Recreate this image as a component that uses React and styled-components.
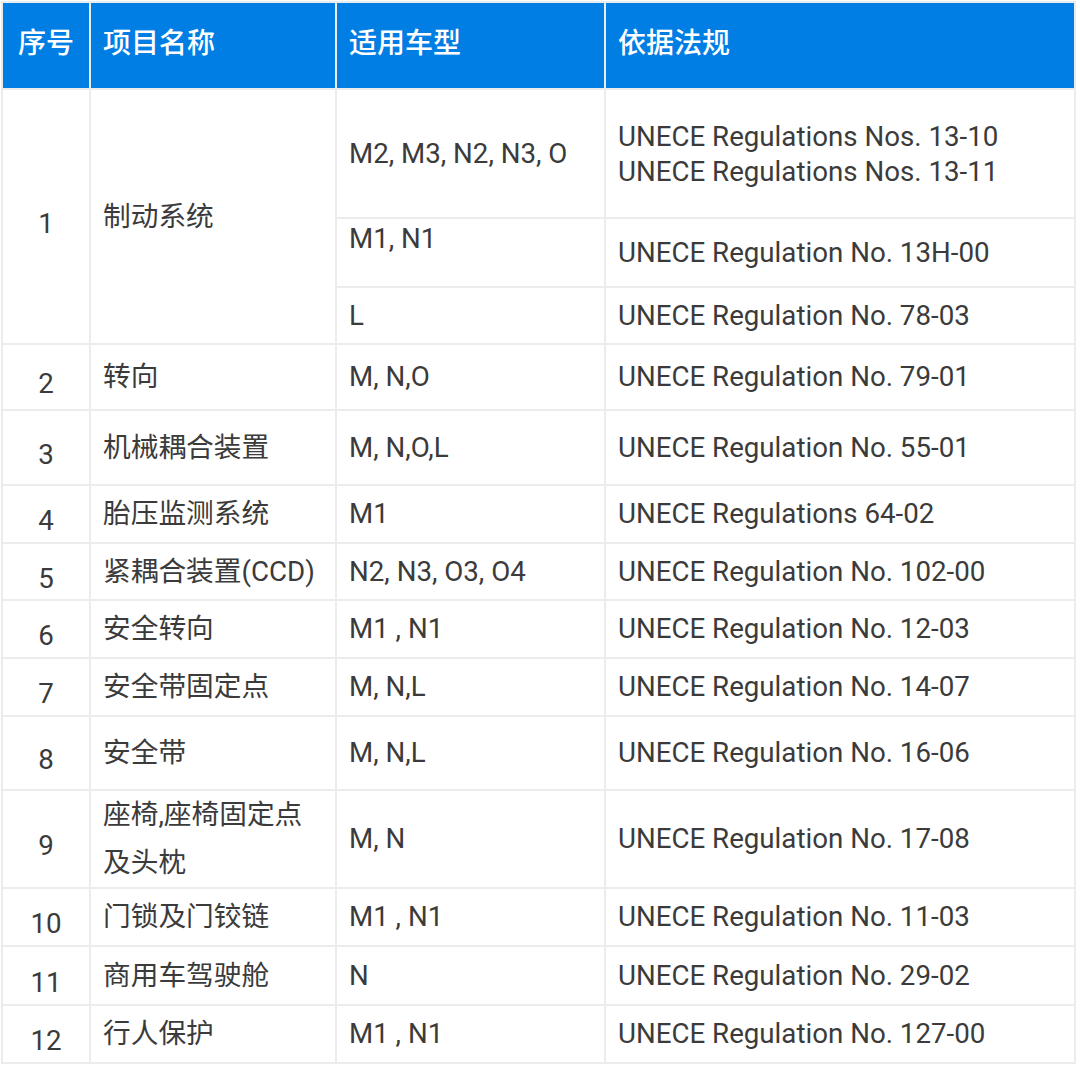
import React from "react";
import styled, { createGlobalStyle } from "styled-components";

const GlobalStyle = createGlobalStyle`
    html, body {
        margin: 0;
        padding: 0;
        background: #ffffff;
    }
    body {
        font-family: Roboto, "Noto Sans CJK SC", "Noto Sans", sans-serif;
    }
`;

const rows = [
    { no: 10, name: "门锁及门铰链", models: "M1 , N1", rule: "UNECE Regulation No. 11-03", h: 58 },
    { no: 11, name: "商用车驾驶舱", models: "N", rule: "UNECE Regulation No. 29-02", h: 59 },
    { no: 12, name: "行人保护", models: "M1 , N1", rule: "UNECE Regulation No. 127-00", h: 58 }
];

const middleRows = [
    { no: 2, name: "转向", models: "M, N,O", rule: "UNECE Regulation No. 79-01", h: 66 },
    { no: 3, name: "机械耦合装置", models: "M, N,O,L", rule: "UNECE Regulation No. 55-01", h: 75 },
    { no: 4, name: "胎压监测系统", models: "M1", rule: "UNECE Regulations 64-02", h: 58 },
    { no: 5, name: "紧耦合装置(CCD)", models: "N2, N3, O3, O4", rule: "UNECE Regulation No. 102-00", h: 57 },
    { no: 6, name: "安全转向", models: "M1 , N1", rule: "UNECE Regulation No. 12-03", h: 58 },
    { no: 7, name: "安全带固定点", models: "M, N,L", rule: "UNECE Regulation No. 14-07", h: 58 },
    { no: 8, name: "安全带", models: "M, N,L", rule: "UNECE Regulation No. 16-06", h: 74 }
];

export default function App() {
    return (
        <Page>
            <GlobalStyle />
            <Table>
                <colgroup>
                    <col style={{ width: 88 }} />
                    <col style={{ width: 246 }} />
                    <col style={{ width: 269 }} />
                    <col style={{ width: 470 }} />
                </colgroup>
                <thead>
                    <Row h={87}>
                        <Head center>序号</Head>
                        <Head>项目名称</Head>
                        <Head>适用车型</Head>
                        <Head>依据法规</Head>
                    </Row>
                </thead>
                <tbody>
                    <Row h={129}>
                        <Num rowSpan={3}>1</Num>
                        <Cell rowSpan={3}>制动系统</Cell>
                        <Cell>M2, M3, N2, N3, O</Cell>
                        <Cell tight>
                            UNECE Regulations Nos. 13-10
                            <br />
                            UNECE Regulations Nos. 13-11
                        </Cell>
                    </Row>
                    <Row h={69}>
                        <Cell top>M1, N1</Cell>
                        <Cell>UNECE Regulation No. 13H-00</Cell>
                    </Row>
                    <Row h={57}>
                        <Cell>L</Cell>
                        <Cell>UNECE Regulation No. 78-03</Cell>
                    </Row>
                    {middleRows.map((r) => (
                        <Row key={r.no} h={r.h}>
                            <Num>{r.no}</Num>
                            <Cell>{r.name}</Cell>
                            <Cell>{r.models}</Cell>
                            <Cell>{r.rule}</Cell>
                        </Row>
                    ))}
                    <Row h={98}>
                        <Num>9</Num>
                        <Cell tall>
                            座椅,座椅固定点
                            <br />
                            及头枕
                        </Cell>
                        <Cell>M, N</Cell>
                        <Cell>UNECE Regulation No. 17-08</Cell>
                    </Row>
                    {rows.map((r) => (
                        <Row key={r.no} h={r.h}>
                            <Num>{r.no}</Num>
                            <Cell>{r.name}</Cell>
                            <Cell>{r.models}</Cell>
                            <Cell>{r.rule}</Cell>
                        </Row>
                    ))}
                </tbody>
            </Table>
        </Page>
    );
}

const Page = styled.div`
    padding: 1px 0 0 1px;
    width: 1080px;
    box-sizing: border-box;
`;

const Table = styled.table`
    border-collapse: collapse;
    table-layout: fixed;
    width: 1075px;
    font-size: 27.7px;
    color: #3b3b3b;
`;

const Row = styled.tr`
    height: ${(p) => p.h}px;
`;

const Head = styled.th`
    background: #007ee4;
    color: #ffffff;
    font-weight: 500;
    font-size: 28px;
    text-align: ${(p) => (p.center ? "center" : "left")};
    padding: 0 12px 10px;
    border: 2px solid #ececec;
    vertical-align: middle;
`;

const Cell = styled.td`
    border: 2px solid #ececec;
    padding: ${(p) => (p.top ? "4px 12px 0" : "0 12px")};
    vertical-align: ${(p) => (p.top ? "top" : "middle")};
    line-height: ${(p) => (p.tall ? "48px" : p.tight ? "35px" : "32px")};
    white-space: nowrap;
`;

const Num = styled.td`
    border: 2px solid #ececec;
    padding: 14px 0 0;
    text-align: center;
    vertical-align: middle;
    line-height: 32px;
`;
